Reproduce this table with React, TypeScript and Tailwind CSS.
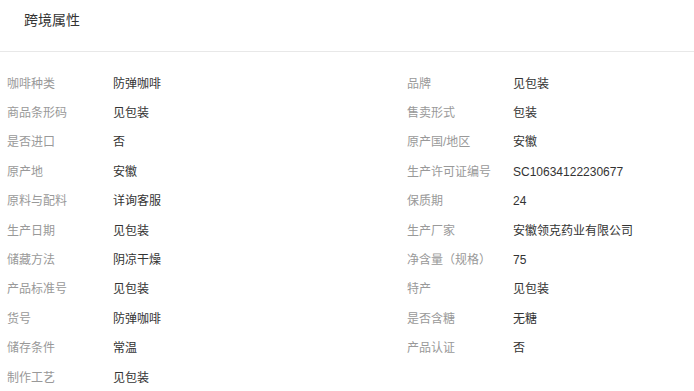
const rows: [string, string, string?, string?][] = [
  ['咖啡种类', '防弹咖啡', '品牌', '见包装'],
  ['商品条形码', '见包装', '售卖形式', '包装'],
  ['是否进口', '否', '原产国/地区', '安徽'],
  ['原产地', '安徽', '生产许可证编号', 'SC10634122230677'],
  ['原料与配料', '详询客服', '保质期', '24'],
  ['生产日期', '见包装', '生产厂家', '安徽领克药业有限公司'],
  ['储藏方法', '阴凉干燥', '净含量（规格）', '75'],
  ['产品标准号', '见包装', '特产', '见包装'],
  ['货号', '防弹咖啡', '是否含糖', '无糖'],
  ['储存条件', '常温', '产品认证', '否'],
  ['制作工艺', '见包装'],
]

function Cell({ label, value }: { label?: string; value?: string }) {
  if (!label) return <div />
  return (
    <div className="flex items-center">
      <span className="w-[106px] shrink-0 text-[#999]">{label}</span>
      <span className="text-[#333]">{value}</span>
    </div>
  )
}

export default function App() {
  return (
    <div
      className="w-[694px] h-[391px] overflow-hidden bg-white"
      style={{ fontFamily: '"Liberation Sans", "Noto Sans CJK SC", sans-serif' }}
    >
      <div className="h-[52px] border-b border-[#e8e8e8] pl-[24px] pt-[10px]">
        <h2 className="text-[14px] leading-[20px] text-[#333]">跨境属性</h2>
      </div>
      <div className="pl-[7px] pt-[17px] text-[12px] leading-[16px]">
        {rows.map(([l1, v1, l2, v2]) => (
          <div key={l1} className="grid grid-cols-[400px_1fr] h-[29.4px]">
            <Cell label={l1} value={v1} />
            <Cell label={l2} value={v2} />
          </div>
        ))}
      </div>
    </div>
  )
}
